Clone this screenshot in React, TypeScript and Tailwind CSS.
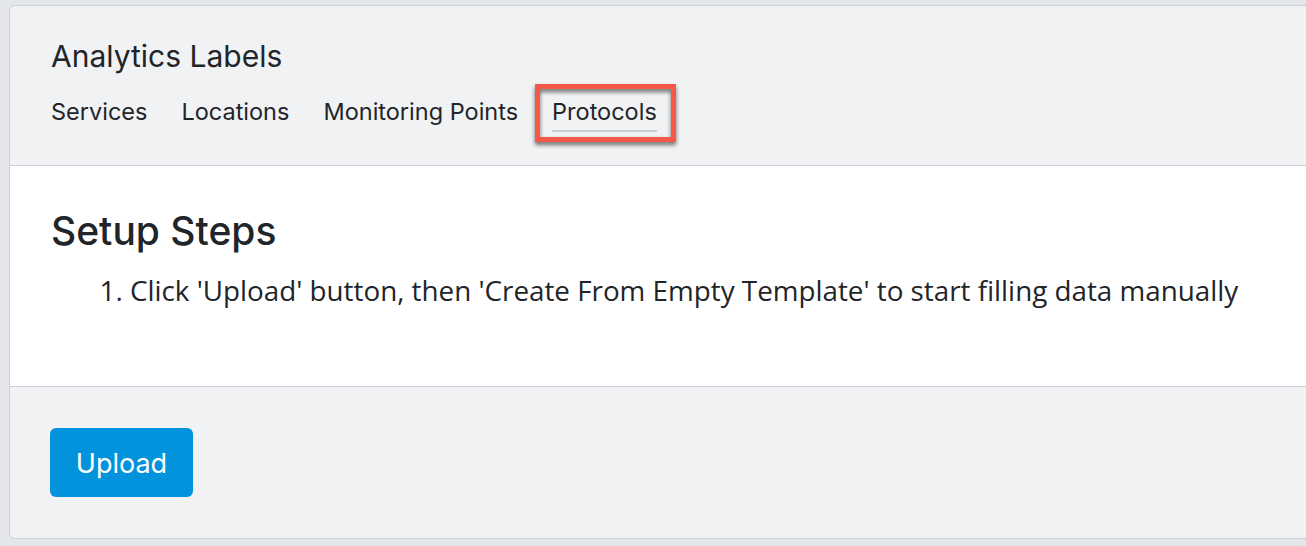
const tabs = ['Services', 'Locations', 'Monitoring Points', 'Protocols']

export default function App() {
  return (
    <div className="h-[546px] w-[1306px] overflow-hidden bg-[#e4e6e9] pt-[5px] pl-[9px] font-['Inter',sans-serif] text-[#212529]">
      <div className="w-[1330px] overflow-hidden rounded-[6px] border border-[#cbd0d6] bg-[#f1f2f4]">
        {/* header */}
        <div className="h-[160px] border-b border-[#cbd0d6] px-[41px] pt-[32px]">
          <h2 className="text-[30px] leading-[36px] font-normal">Analytics Labels</h2>
          <nav className="mt-[23px] flex gap-[34px]">
            {tabs.map((t) => {
              const active = t === 'Protocols'
              return (
                <div key={t} className="relative">
                  <span
                    className={
                      'block pb-[3px] text-[23.5px] leading-[30px] ' +
                      (active ? 'border-b-2 border-[#c8ccd2]' : 'border-b-2 border-transparent')
                    }
                  >
                    {t}
                  </span>
                  {active && (
                    <div className="absolute -top-[13px] -left-[17px] -right-[19px] h-[58px] border-[5px] border-[#f5584a] drop-shadow-[0_3px_2px_rgba(0,0,0,0.55)]" />
                  )}
                </div>
              )
            })}
          </nav>
        </div>

        {/* body */}
        <div className="h-[221px] border-b border-[#cbd0d6] bg-white px-[41px] pt-[42px]">
          <h1 className="text-[39px] leading-[46px] font-medium">Setup Steps</h1>
          <ol className="mt-[17px] list-decimal pl-[79px] font-['Open_Sans',sans-serif] text-[27.8px] leading-[38px]">
            <li>Click 'Upload' button, then 'Create From Empty Template' to start filling data manually</li>
          </ol>
        </div>

        {/* footer */}
        <div className="h-[151px] px-[40px] pt-[41px]">
          <button className="h-[69px] w-[143px] rounded-[6px] bg-[#0293dc] pt-[4px] text-[27px] text-white">
            Upload
          </button>
        </div>
      </div>
    </div>
  )
}
